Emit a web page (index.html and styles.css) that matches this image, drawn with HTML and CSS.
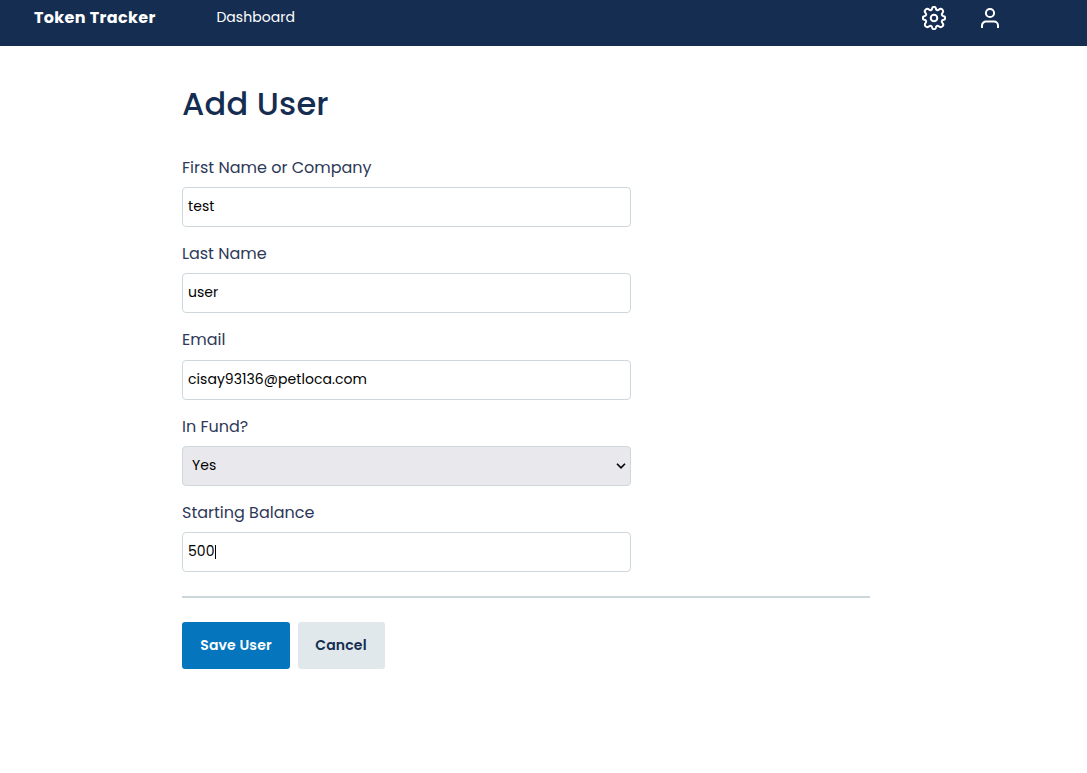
FILE: index.html
```html
<!DOCTYPE html>
<html lang="en">
<head>
<meta charset="utf-8">
<title>Token Tracker</title>
<link rel="stylesheet" href="styles.css">
</head>
<body>
<header class="topbar">
  <a class="brand">Token Tracker</a>
  <nav class="nav"><a class="nav-link">Dashboard</a></nav>
  <div class="actions">
    <svg class="icon gear" viewBox="1 1 22 22"><circle cx="12" cy="12" r="3"/><path d="M10.3 3.1a1.75 1.75 0 0 1 3.4 0c.2 1.7 1.4 2.2 2.8 1.2a1.75 1.75 0 0 1 3.2 3.2c-1 1.4-.5 2.6 1.2 2.8a1.75 1.75 0 0 1 0 3.4c-1.7.2-2.2 1.4-1.2 2.8a1.75 1.75 0 0 1-3.2 3.2c-1.4-1-2.6-.5-2.8 1.2a1.75 1.75 0 0 1-3.4 0c-.2-1.7-1.4-2.2-2.8-1.2a1.75 1.75 0 0 1-3.2-3.2c1-1.4.5-2.6-1.2-2.8a1.75 1.75 0 0 1 0-3.4c1.7-.2 2.2-1.4 1.2-2.8a1.75 1.75 0 0 1 3.2-3.2c1.4 1 2.6.5 2.8-1.2z"/></svg>
    <svg class="icon" viewBox="0 0 24 24"><circle cx="12" cy="7" r="4.1"/><path d="M4 22v-2.5a4 4 0 0 1 4-4h8a4 4 0 0 1 4 4V22"/></svg>
  </div>
</header>
<main class="page">
  <h1 class="title">Add User</h1>
  <form class="form">
    <div class="field"><label class="label" for="first">First Name or Company</label><input class="control" id="first" value="test"></div>
    <div class="field"><label class="label" for="last">Last Name</label><input class="control" id="last" value="user"></div>
    <div class="field"><label class="label" for="email">Email</label><input class="control email" id="email" value="cisay93136@petloca.com"></div>
    <div class="field"><label class="label" for="fund">In Fund?</label>
      <div class="control select" id="fund"><span>Yes</span><svg class="chevron" viewBox="0 0 10 6"><path d="M1 .8l4 4 4-4"/></svg></div></div>
    <div class="field"><label class="label" for="balance">Starting Balance</label><div class="control active" id="balance"><span>500</span><span class="caret"></span></div></div>
    <hr class="divider">
    <div class="buttons"><button class="btn primary" type="button">Save User</button><button class="btn secondary" type="button">Cancel</button></div>
  </form>
</main>
</body>
</html>
```
FILE: styles.css
```css
* { box-sizing: border-box; }
body { margin: 0; background: #fff; color: #000; font-family: Poppins, Inter, sans-serif; }
.topbar { display: flex; align-items: flex-start; height: 46px; padding: 5px 85px 0 34px; background: #152d51; color: #fff; }
.brand { width: 182.4px; font-size: 16px; font-weight: 700; line-height: 25px; letter-spacing: .36px; }
.nav { display: flex; }
.nav-link { font-size: 14px; line-height: 24px; letter-spacing: .05px; }
.actions { display: flex; gap: 32px; margin-left: auto; padding-top: 1px; }
.icon { width: 24px; height: 24px; fill: none; stroke: #fff; stroke-width: 2; }
.gear { stroke-width: 1.85; }
.page { width: 688px; margin-left: 182px; padding-top: 34px; }
.title { margin: 0; font-size: 32px; font-weight: 500; line-height: 48px; letter-spacing: .2px; color: #152d51; }
.form { padding-top: 26.7px; }
.field { width: 449px; height: 86.3px; }
.label { display: block; height: 32.4px; line-height: 25px; font-size: 16px; color: #2e3858; }
.control { display: flex; align-items: center; width: 100%; height: 40px; border: 1px solid #cdd8dd; border-radius: 4px; padding: 0 5px 1.6px; background: #fff; color: #000; font-family: inherit; font-size: 14px; letter-spacing: .05px; }
.email { padding-bottom: 0; }
.select { justify-content: space-between; padding: 0 4px 1px 9px; background: #e8e8ed; }
.chevron { width: 10px; height: 6px; margin-top: 2px; fill: none; stroke: #000; stroke-width: 1.6; }
.caret { width: 1px; height: 14px; margin-top: 2px; margin-left: .5px; background: #000; }
.divider { height: 2px; margin: 10px 0 24px; border: 0; background: #cdd8dc; }
.buttons { display: flex; gap: 8px; }
.btn { height: 47px; border: 0; border-radius: 3px; padding: 0 0 1px; font-family: inherit; font-size: 14px; font-weight: 600; letter-spacing: .17px; }
.primary { width: 108px; background: #0576bd; color: #fff; }
.secondary { width: 87px; padding-right: 1px; background: #e0e8eb; color: #152d51; }
```
